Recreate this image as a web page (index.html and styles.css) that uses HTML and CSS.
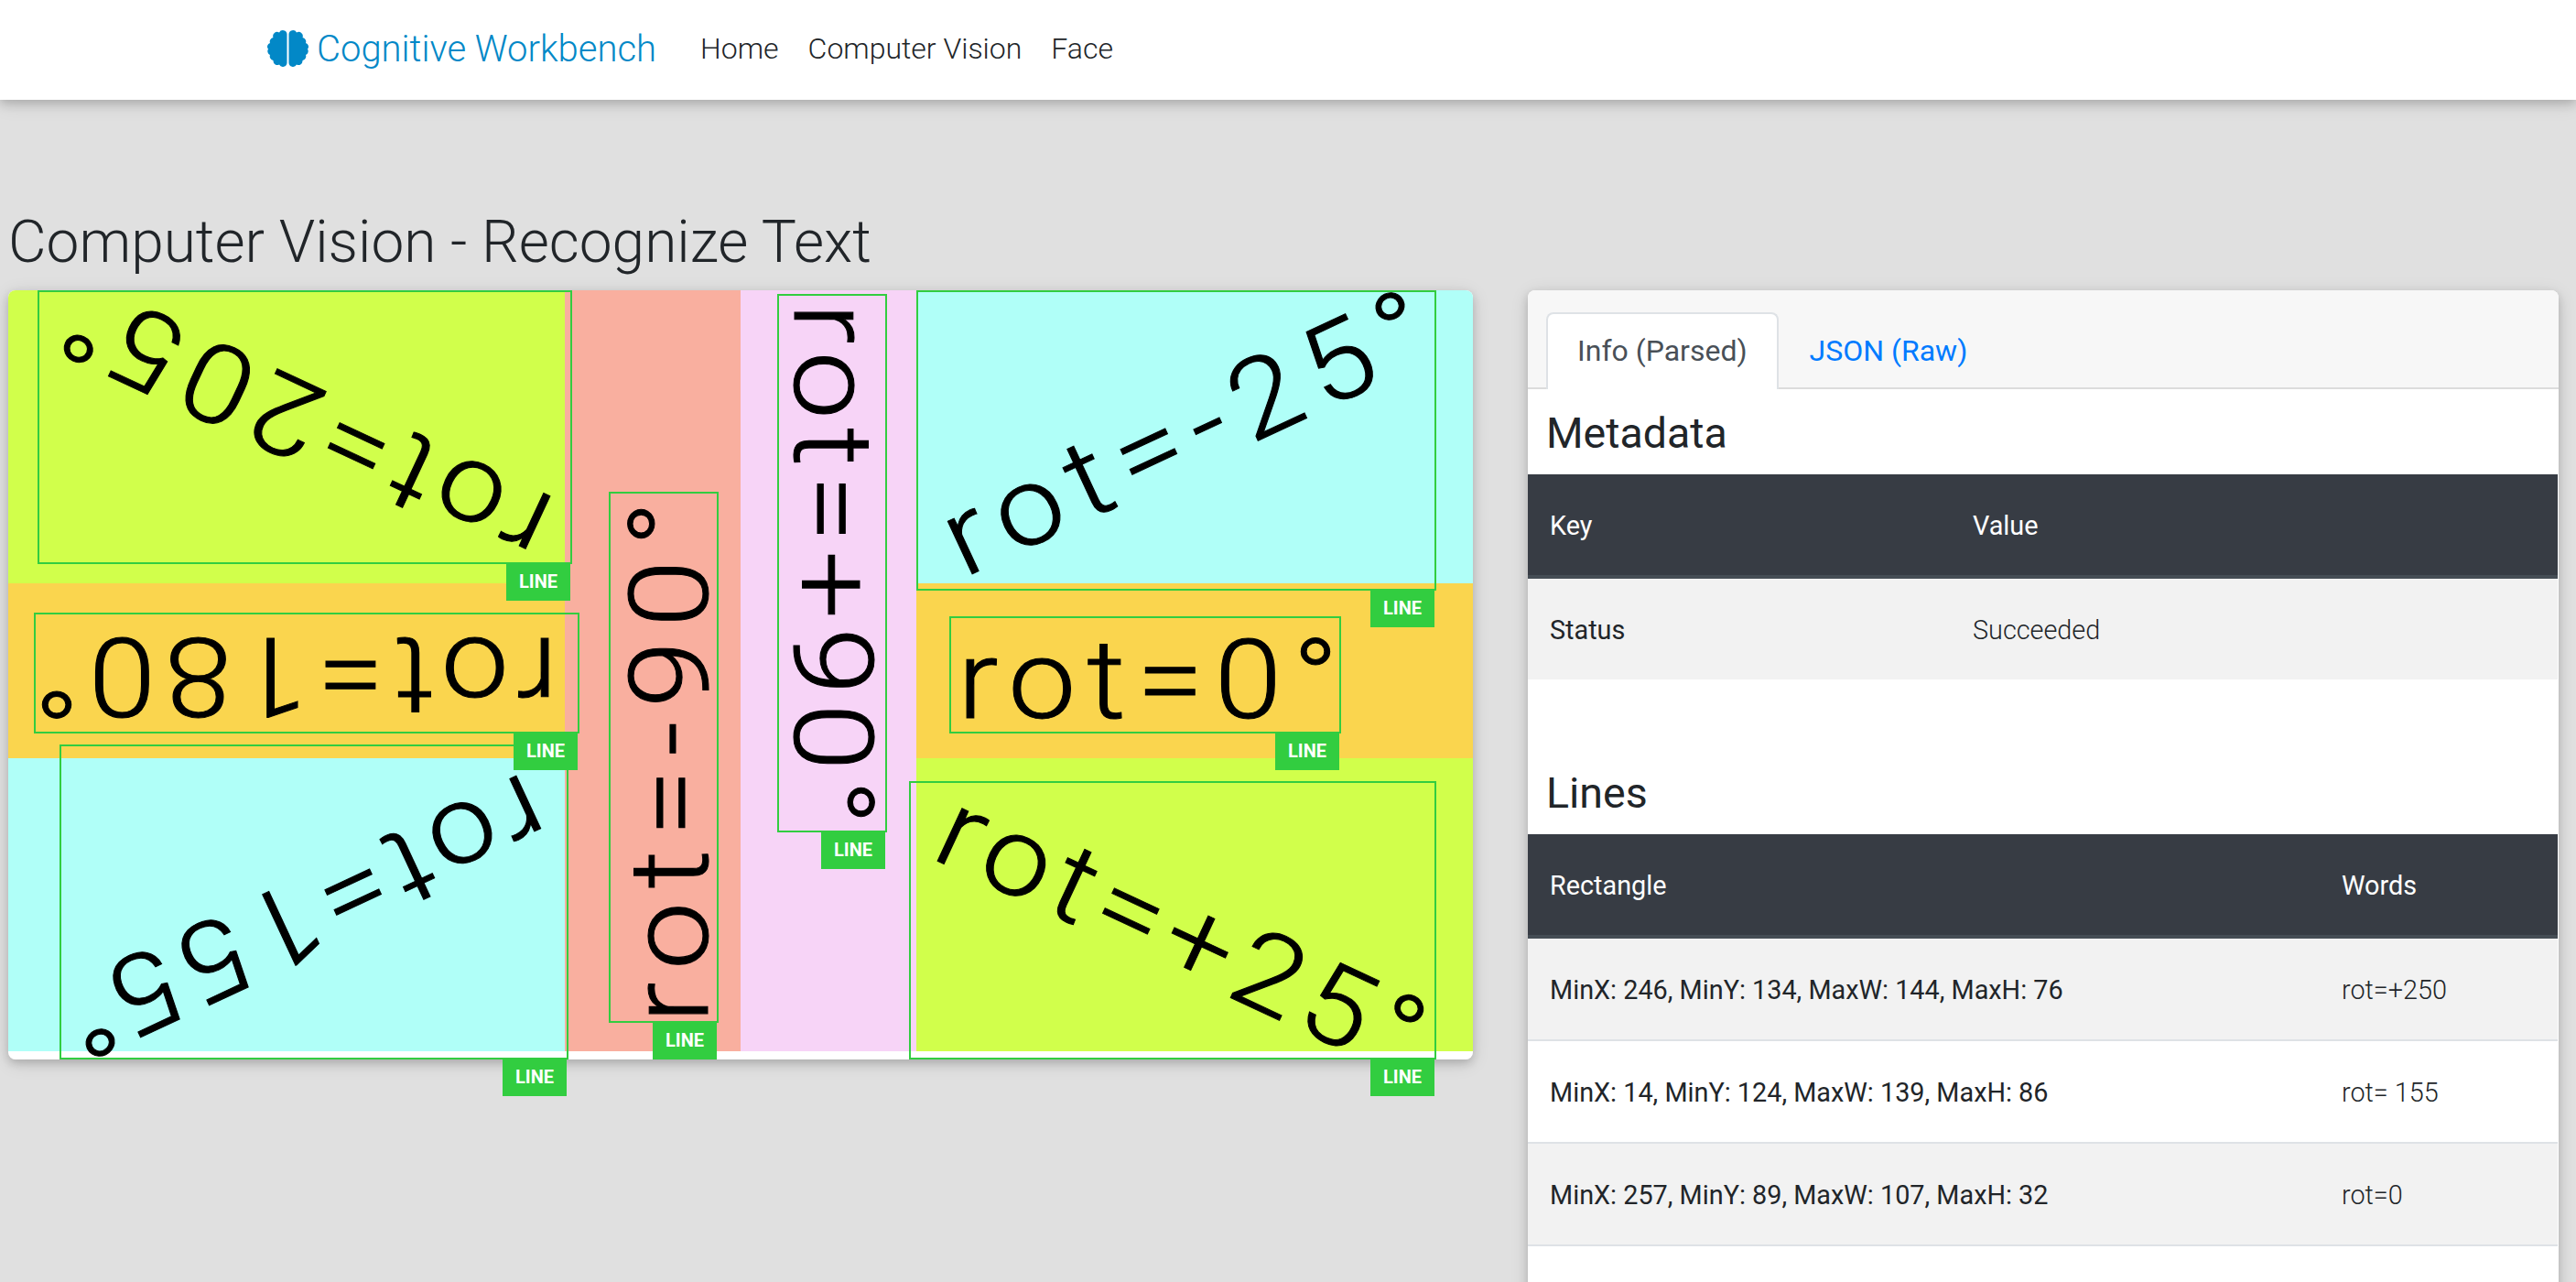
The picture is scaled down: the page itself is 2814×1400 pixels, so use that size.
FILE: index.html
```html
<!doctype html>
<html>
<head>
<title>Cognitive Workbench</title>
<link rel="stylesheet" href="styles.css">
</head>
<body>
<nav class="navbar">
	<a class="brand" href="#">
		<svg class="brain" viewBox="0 0 45 40">
			<path d="M21.5 4.5A4.5 4.5 0 0 0 13 2.500A4.500 4.500 0 0 0 6.500 8A4.500 4.500 0 0 0 3 14A4 4 0 0 0 1 20.500A4.500 4.500 0 0 0 3 27A4.500 4.500 0 0 0 6.500 33A4.500 4.500 0 0 0 13 37.500A4.500 4.500 0 0 0 21.500 35.500Z"/>
			<path d="M23.5 4.5A4.5 4.5 0 0 1 32 2.500A4.500 4.500 0 0 1 38.500 8A4.500 4.500 0 0 1 42 14A4 4 0 0 1 44 20.500A4.500 4.500 0 0 1 42 27A4.500 4.500 0 0 1 38.500 33A4.500 4.500 0 0 1 32 37.500A4.500 4.500 0 0 1 23.500 35.500Z"/>
		</svg>
		Cognitive Workbench
	</a>
	<a class="nav-link" href="#">Home</a>
	<a class="nav-link" href="#">Computer Vision</a>
	<a class="nav-link" href="#">Face</a>
</nav>

<main class="page">
	<h1>Computer Vision - Recognize Text</h1>
	<div class="columns">
		<div class="picture">
			<svg class="scan" viewBox="0 0 1600 840">
				<rect x="0" y="0" width="1600" height="840" fill="#fff"/>
				<rect x="0" y="0" width="608" height="320" fill="#d1ff4b"/>
				<rect x="0" y="320" width="608" height="191" fill="#fad54e"/>
				<rect x="0" y="511" width="608" height="320" fill="#b0fff8"/>
				<rect x="608" y="0" width="192" height="831" fill="#f9af9f"/>
				<rect x="800" y="0" width="192" height="831" fill="#f7d4f7"/>
				<rect x="992" y="0" width="608" height="320" fill="#b0fff8"/>
				<rect x="992" y="320" width="608" height="191" fill="#fad54e"/>
				<rect x="992" y="511" width="608" height="320" fill="#d1ff4b"/>
				<text transform="translate(601 229) rotate(205) scale(1.1 1)" textLength="518">rot=205°</text>
				<text transform="translate(600 380) rotate(180) scale(1.1 1)" textLength="520">rot=180°</text>
				<text transform="translate(564 526) rotate(155) scale(1.1 1)" textLength="518">rot=155°</text>
				<text transform="translate(764 800) rotate(-90) scale(1.1 1)" textLength="518">rot=-90°</text>
				<text transform="translate(859 14) rotate(90) scale(1.1 1)" textLength="518">rot=+90°</text>
				<text transform="translate(1044 314) rotate(-25) scale(1.1 1)" textLength="520">rot=-25°</text>
				<text transform="translate(1037 467) scale(1.1 1)" textLength="378">rot=0°</text>
				<text transform="translate(1006 619) rotate(25) scale(1.1 1)" textLength="518">rot=+25°</text>
			</svg>
			<div class="box box-205"><span class="tag">LINE</span></div>
			<div class="box box-180"><span class="tag">LINE</span></div>
			<div class="box box-155"><span class="tag">LINE</span></div>
			<div class="box box-m90"><span class="tag">LINE</span></div>
			<div class="box box-p90"><span class="tag">LINE</span></div>
			<div class="box box-m25"><span class="tag">LINE</span></div>
			<div class="box box-0"><span class="tag">LINE</span></div>
			<div class="box box-p25"><span class="tag">LINE</span></div>
		</div>

		<div class="card">
			<div class="tabs">
				<a class="tab active" href="#">Info (Parsed)</a>
				<a class="tab" href="#">JSON (Raw)</a>
			</div>
			<h3>Metadata</h3>
			<table class="meta">
				<thead>
					<tr><th>Key</th><th>Value</th></tr>
				</thead>
				<tbody>
					<tr><td class="key">Status</td><td>Succeeded</td></tr>
				</tbody>
			</table>
			<h3>Lines</h3>
			<table class="lines">
				<thead>
					<tr><th>Rectangle</th><th>Words</th></tr>
				</thead>
				<tbody>
					<tr><td class="key">MinX: 246, MinY: 134, MaxW: 144, MaxH: 76</td><td>rot=+250</td></tr>
					<tr><td class="key">MinX: 14, MinY: 124, MaxW: 139, MaxH: 86</td><td>rot= 155</td></tr>
					<tr><td class="key">MinX: 257, MinY: 89, MaxW: 107, MaxH: 32</td><td>rot=0</td></tr>
				</tbody>
			</table>
		</div>
	</div>
</main>
</body>
</html>
```

FILE: styles.css
```css
html, body {
	height: 100%;
}
body {
	margin: 0;
	overflow: hidden;
	background-color: #e0e0e0;
	font-family: Roboto, sans-serif;
	font-weight: 300;
	font-size: 32px;
	color: #212529;
}
a {
	text-decoration: none;
}
.navbar {
	display: flex;
	align-items: center;
	box-sizing: border-box;
	height: 109px;
	padding: 0 0 3px 292px;
	background-color: #fff;
	box-shadow: 0 4px 10px rgba(0, 0, 0, 0.16), 0 4px 20px rgba(0, 0, 0, 0.12);
}
.brand {
	display: flex;
	align-items: center;
	gap: 9px;
	margin-right: 48px;
	font-size: 40px;
	color: #0288c7;
}
.brain {
	width: 45px;
	height: 40px;
	fill: #0288c7;
}
.nav-link {
	margin-right: 32px;
	color: #212529;
}
.page {
	padding: 0 19px 0 9px;
}
h1 {
	margin: 0;
	padding: 118px 0 0 0;
	height: 90px;
	font-size: 64px;
	line-height: 76px;
	font-weight: 300;
}
.columns {
	display: flex;
	gap: 60px;
	align-items: flex-start;
}
.picture {
	position: relative;
	flex: none;
	width: 1600px;
	height: 840px;
	border-radius: 8px;
	box-shadow: 0 4px 10px rgba(0, 0, 0, 0.16), 0 4px 20px rgba(0, 0, 0, 0.12);
}
.scan {
	display: block;
	width: 1600px;
	height: 840px;
	border-radius: 8px;
}
.scan text {
	font-family: Roboto, sans-serif;
	font-weight: 300;
	font-size: 120px;
	fill: #000;
	stroke: #000;
	stroke-width: 1px;
}
.box {
	position: absolute;
	box-sizing: border-box;
	border: 2px solid #32cd40;
}
.tag {
	position: absolute;
	z-index: 1;
	right: 0;
	top: 100%;
	width: 70px;
	height: 42px;
	line-height: 42px;
	text-align: center;
	background-color: #32cd40;
	color: #fff;
	font-size: 20px;
	font-weight: 700;
}
.box-205 { left: 32px; top: 0; width: 584px; height: 299px; }
.box-180 { left: 28px; top: 352px; width: 596px; height: 132px; }
.box-155 { left: 56px; top: 496px; width: 556px; height: 344px; }
.box-m90 { left: 656px; top: 220px; width: 120px; height: 580px; }
.box-p90 { left: 840px; top: 4px; width: 120px; height: 588px; }
.box-m25 { left: 992px; top: 0; width: 568px; height: 328px; }
.box-0 { left: 1028px; top: 356px; width: 428px; height: 128px; }
.box-p25 { left: 984px; top: 536px; width: 576px; height: 304px; }

.card {
	flex: 1;
	height: 1200px;
	background-color: #fff;
	border-radius: 8px 8px 0 0;
	box-shadow: 0 4px 10px rgba(0, 0, 0, 0.16), 0 4px 20px rgba(0, 0, 0, 0.12);
}
.tabs {
	display: flex;
	box-sizing: border-box;
	height: 108px;
	padding: 24px 20px 0;
	background-color: #f7f7f7;
	border-bottom: 2px solid #dcdcdc;
	border-radius: 8px 8px 0 0;
}
.tab {
	box-sizing: border-box;
	height: 84px;
	padding: 18px 34px 14px;
	line-height: 48px;
	font-weight: 400;
	color: #007bff;
}
.tab.active {
	color: #495057;
	background-color: #fff;
	border: 2px solid #dee2e6;
	border-bottom: none;
	border-radius: 8px 8px 0 0;
	padding: 16px 32px 14px;
}
h3 {
	margin: 0;
	padding: 20px 0 17px 20px;
	font-size: 46.5px;
	line-height: 56px;
	font-weight: 400;
}
table {
	width: 1125px;
	border-collapse: separate;
	border-spacing: 0;
	table-layout: fixed;
	font-size: 28.8px;
}
.meta {
	margin-bottom: 76px;
}
.meta th:first-child {
	width: 462px;
}
.lines th:first-child {
	width: 865px;
}
th {
	box-sizing: border-box;
	height: 114px;
	padding: 2px 24px 0;
	text-align: left;
	font-weight: 400;
	color: #fff;
	background-color: #373c44;
	border-bottom: 4px solid #454d55;
}
td {
	box-sizing: border-box;
	height: 110px;
	padding: 2px 24px 0;
}
.key {
	font-weight: 400;
}
tbody tr:nth-child(odd) {
	background-color: #f2f2f2;
}
.lines td {
	height: 112px;
	border-bottom: 2px solid #dee2e6;
}
```
